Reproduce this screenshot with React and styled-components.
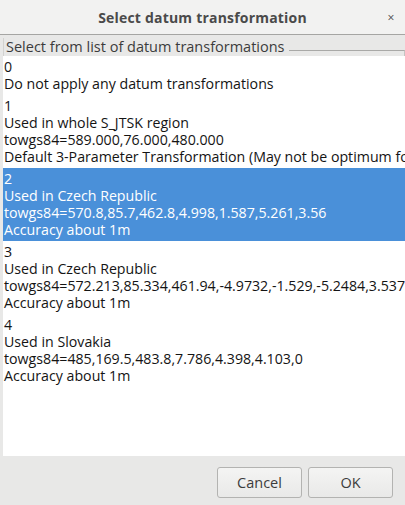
import React from "react";
import styled, { createGlobalStyle } from "styled-components";

const GlobalStyle = createGlobalStyle`
  html, body { margin: 0; padding: 0; }
  body {
    background: #e8e8e7;
    font-family: "Open Sans", "Noto Sans", sans-serif;
    overflow: hidden;
  }
`;

const Window = styled.div`
  width: 405px;
  height: 505px;
  display: flex;
  flex-direction: column;
  background: #e8e8e7;
  overflow: hidden;
`;

const TitleBar = styled.div`
  height: 34px;
  flex: none;
  display: grid;
  grid-template-columns: 40px 1fr 40px;
  align-items: center;
  background: #f2f2f1;
  border-bottom: 1px solid #a5a5a3;
`;

const Title = styled.div`
  grid-column: 2;
  text-align: center;
  font-weight: 700;
  font-size: 14px;
  color: #4a4a4a;
  letter-spacing: 0.2px;
`;

const CloseBtn = styled.div`
  grid-column: 3;
  text-align: center;
  font-size: 12px;
  color: #4a4a4a;
  padding-left: 12px;
`;

const GroupHeader = styled.div`
  height: 21px;
  flex: none;
  display: flex;
  align-items: flex-end;
  padding-left: 3px;
`;

const GroupLabel = styled.div`
  font-size: 14.5px;
  line-height: 18px;
  color: #3c3c3c;
  padding: 0 4px 0 2px;
  border-left: 1px solid #d2d2d0;
`;

const GroupLine = styled.div`
  flex: 1;
  align-self: stretch;
  margin-top: 15px;
  border-top: 1px solid #a9a9a7;
  border-right: 1px solid #c4c4c2;
`;

const List = styled.div`
  flex: none;
  height: 400px;
  margin-left: 3px;
  width: 460px;
  background: #ffffff;
  overflow: hidden;
`;

const Item = styled.div`
  padding: 2px 0 3px 1px;
  font-size: 14.2px;
  line-height: 17px;
  white-space: nowrap;
  color: ${(p) => (p.$selected ? "#ffffff" : "#141414")};
  background: ${(p) => (p.$selected ? "#4a90d9" : "transparent")};
`;

const Footer = styled.div`
  flex: 1;
  display: flex;
  justify-content: flex-end;
  align-items: flex-start;
  gap: 6px;
  padding: 11px 12px 0 0;
`;

const Button = styled.button`
  width: 85px;
  height: 31px;
  border: 1px solid #b3b3b1;
  border-radius: 3px;
  background: linear-gradient(#f4f4f3, #e9e9e8);
  font-family: inherit;
  font-size: 14.5px;
  color: #3c3c3c;
  padding: 0;
`;

const items = [
  ["0", "Do not apply any datum transformations"],
  [
    "1",
    "Used in whole S_JTSK region",
    "towgs84=589.000,76.000,480.000",
    "Default 3-Parameter Transformation (May not be optimum for older datums; use this only if no more appropriate options are available.)",
  ],
  [
    "2",
    "Used in Czech Republic",
    "towgs84=570.8,85.7,462.8,4.998,1.587,5.261,3.56",
    "Accuracy about 1m",
  ],
  [
    "3",
    "Used in Czech Republic",
    "towgs84=572.213,85.334,461.94,-4.9732,-1.529,-5.2484,3.5378",
    "Accuracy about 1m",
  ],
  [
    "4",
    "Used in Slovakia",
    "towgs84=485,169.5,483.8,7.786,4.398,4.103,0",
    "Accuracy about 1m",
  ],
];

export default function App() {
  return (
    <>
      <GlobalStyle />
      <Window>
        <TitleBar>
          <Title>Select datum transformation</Title>
          <CloseBtn>×</CloseBtn>
        </TitleBar>
        <GroupHeader>
          <GroupLabel>Select from list of datum transformations</GroupLabel>
          <GroupLine />
        </GroupHeader>
        <List>
          {items.map((lines, i) => (
            <Item key={i} $selected={i === 2}>
              {lines.map((l, j) => (
                <div key={j}>{l}</div>
              ))}
            </Item>
          ))}
        </List>
        <Footer>
          <Button>Cancel</Button>
          <Button>OK</Button>
        </Footer>
      </Window>
    </>
  );
}
